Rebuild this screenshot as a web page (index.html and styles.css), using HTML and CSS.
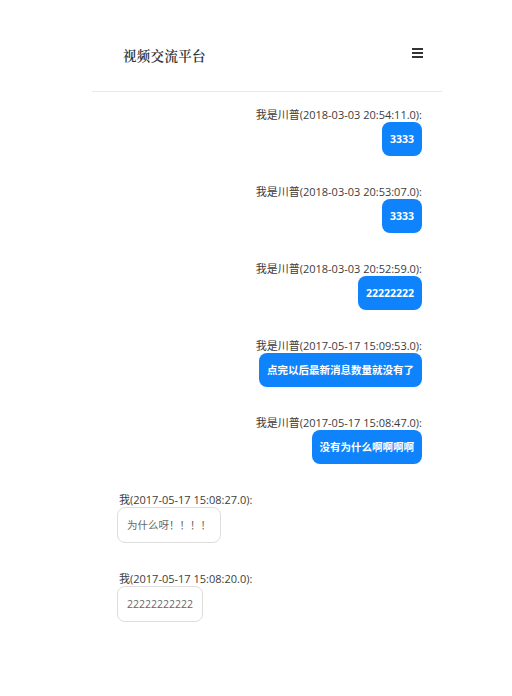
FILE: index.html
```html
<!DOCTYPE html>
<html lang="zh">
<head>
<meta charset="utf-8">
<title>视频交流平台</title>
<link rel="stylesheet" href="styles.css">
</head>
<body>
<div class="page">
  <header class="header">
    <div class="title">视频交流平台</div>
    <div class="menu" aria-label="menu"><span></span><span></span><span></span></div>
  </header>
  <main class="chat">
    <div class="msg right">
      <div class="label">我是川普(2018-03-03 20:54:11.0):</div>
      <div class="bubble">3333</div>
    </div>
    <div class="msg right">
      <div class="label">我是川普(2018-03-03 20:53:07.0):</div>
      <div class="bubble">3333</div>
    </div>
    <div class="msg right">
      <div class="label">我是川普(2018-03-03 20:52:59.0):</div>
      <div class="bubble">22222222</div>
    </div>
    <div class="msg right">
      <div class="label">我是川普(2017-05-17 15:09:53.0):</div>
      <div class="bubble">点完以后最新消息数量就没有了</div>
    </div>
    <div class="msg right">
      <div class="label">我是川普(2017-05-17 15:08:47.0):</div>
      <div class="bubble">没有为什么啊啊啊啊</div>
    </div>
    <div class="msg left">
      <div class="label">我(2017-05-17 15:08:27.0):</div>
      <div class="bubble">为什么呀！！！！</div>
    </div>
    <div class="msg left">
      <div class="label">我(2017-05-17 15:08:20.0):</div>
      <div class="bubble">22222222222</div>
    </div>
  </main>
</div>
</body>
</html>
```
FILE: styles.css
```css
html, body {
  margin: 0;
  padding: 0;
  background: #ffffff;
}
body {
  font-family: "Open Sans", "Noto Sans CJK SC", sans-serif;
  color: #333333;
}
.page {
  margin-left: 92px;
  width: 350px;
}
.header {
  height: 92px;
  box-sizing: border-box;
  border-bottom: 1px solid #e9e9e9;
  display: flex;
  align-items: center;
  justify-content: space-between;
  padding: 18px 19px 0 31px;
}
.title {
  font-family: "Noto Serif CJK SC", "Noto Sans CJK SC", serif;
  font-size: 13.5px;
  letter-spacing: 0.3px;
  color: #333333;
  font-weight: 600;
}
.menu {
  width: 11px;
  display: flex;
  flex-direction: column;
  gap: 2px;
  margin-top: -4px;
}
.menu span {
  display: block;
  height: 2px;
  background: #333333;
}
.chat {
  display: flex;
  flex-direction: column;
  padding: 15px 20px 0 25px;
}
.msg {
  display: flex;
  flex-direction: column;
  margin-bottom: 28px;
}
.msg.right {
  align-items: flex-end;
}
.msg.left {
  align-items: flex-start;
}
.label {
  font-size: 11px;
  line-height: 15px;
  color: #3c3c3c;
  white-space: nowrap;
}
.msg.left .label {
  padding-left: 2px;
}
.bubble {
  font-size: 10.5px;
  line-height: 14px;
  border-radius: 8px;
  padding: 10px 8px;
  white-space: nowrap;
}
.msg.right .bubble {
  background: #0f83fb;
  color: #ffffff;
  font-weight: bold;
}
.msg.left .bubble {
  border: 1px solid #dddddd;
  color: #666666;
  padding: 10px 9px;
}
```
